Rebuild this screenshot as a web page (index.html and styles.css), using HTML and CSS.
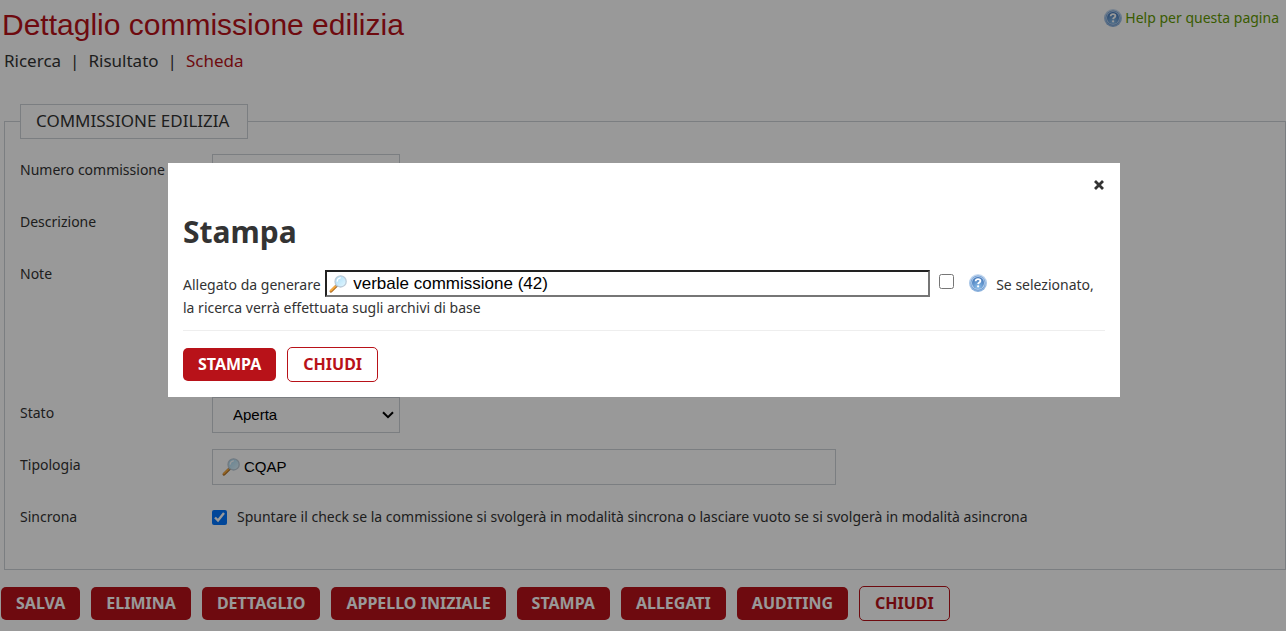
FILE: index.html
```html
<!DOCTYPE html>
<html lang="it">
<head>
<meta charset="utf-8">
<title>Dettaglio commissione edilizia</title>
<meta name="viewport" content="width=device-width, initial-scale=1">
<link rel="stylesheet" href="styles.css">
</head>
<body>
<svg class="sprite" aria-hidden="true">
  <defs>
    <radialGradient id="help-fill" cx="50%" cy="85%" r="80%">
      <stop offset="0" stop-color="#8fc0ea"/>
      <stop offset="1" stop-color="#4377b9"/>
    </radialGradient>
    <linearGradient id="help-rim" x1="0" y1="0" x2="0" y2="1">
      <stop offset="0" stop-color="#c9dcf2"/>
      <stop offset="1" stop-color="#86aedb"/>
    </linearGradient>
    <linearGradient id="lens-fill" x1="0" y1="0" x2="1" y2="1">
      <stop offset="0" stop-color="#a5dbf7"/>
      <stop offset="1" stop-color="#e6f8ff"/>
    </linearGradient>
    <symbol id="icon-help" viewBox="0 0 18 18">
      <circle cx="9" cy="9" r="9" fill="url(#help-rim)"/>
      <circle cx="9" cy="9" r="7.4" fill="#6f9bd0"/>
      <circle cx="9" cy="9" r="6.8" fill="#b9d2ee"/>
      <circle cx="9" cy="9" r="6" fill="url(#help-fill)"/>
      <path d="M6.6 7.2C6.7 5.8 7.6 5.1 9 5.1s2.4.7 2.4 1.9c0 1.5-2.1 1.5-2.3 3.1" fill="none" stroke="#fff" stroke-width="1.8"/>
      <circle cx="9.1" cy="12.3" r="1.1" fill="#fff"/>
    </symbol>
    <symbol id="icon-lens" viewBox="0 0 18 18">
      <path d="M7.6 10.8L2 16.2" stroke="#b06f24" stroke-width="2.8" stroke-linecap="round"/>
      <path d="M7.2 10.4L1.8 15.6" stroke="#f5a93f" stroke-width="1.9" stroke-linecap="round"/>
      <path d="M8.4 9.8L7 11.2" stroke="#8d9499" stroke-width="2.2"/>
      <circle cx="11.6" cy="6.4" r="5.6" fill="url(#lens-fill)" stroke="#bccbd8" stroke-width="1.3"/>
      <path d="M8.2 6.2a3.6 3.6 0 0 1 3.2-3.3" fill="none" stroke="#fff" stroke-width="1.2" stroke-linecap="round"/>
    </symbol>
  </defs>
</svg>

<header class="page-header">
  <div>
    <h1 class="page-title">Dettaglio commissione edilizia</h1>
    <nav class="crumbs">
      <a href="#ricerca">Ricerca</a><span>|</span><a href="#risultato">Risultato</a><span>|</span><a class="current" href="#scheda">Scheda</a>
    </nav>
  </div>
  <a class="help-link" href="#help"><svg class="icon" aria-hidden="true"><use href="#icon-help"/></svg>Help per questa pagina</a>
</header>

<main>
  <fieldset class="panel">
    <legend>COMMISSIONE EDILIZIA</legend>
    <div class="row">
      <label for="numero">Numero commissione</label>
      <input id="numero" class="field short" type="text">
    </div>
    <div class="row">
      <label for="descrizione">Descrizione</label>
      <input id="descrizione" class="field" type="text">
    </div>
    <div class="row">
      <label for="note">Note</label>
      <textarea id="note" class="field note"></textarea>
    </div>
    <div class="row">
      <label for="stato">Stato</label>
      <div class="select-box field short">
        <select id="stato"><option>Aperta</option></select>
        <svg class="chevron" viewBox="0 0 12 8" aria-hidden="true"><path d="M1 1.2l5 5 5-5" fill="none" stroke="#000" stroke-width="2"/></svg>
      </div>
    </div>
    <div class="row">
      <label for="tipologia">Tipologia</label>
      <div class="search-box field">
        <svg class="icon" aria-hidden="true"><use href="#icon-lens"/></svg>
        <input id="tipologia" type="text" value="CQAP">
      </div>
    </div>
    <div class="row">
      <span>Sincrona</span>
      <div class="check-line">
        <input id="sincrona" class="check" type="checkbox" checked>
        <label for="sincrona">Spuntare il check se la commissione si svolgerà in modalità sincrona o lasciare vuoto se si svolgerà in modalità asincrona</label>
      </div>
    </div>
  </fieldset>

  <div class="actions">
    <button class="btn" type="button">SALVA</button>
    <button class="btn" type="button">ELIMINA</button>
    <button class="btn" type="button">DETTAGLIO</button>
    <button class="btn" type="button">APPELLO INIZIALE</button>
    <button class="btn" type="button">STAMPA</button>
    <button class="btn" type="button">ALLEGATI</button>
    <button class="btn" type="button">AUDITING</button>
    <button class="btn outline" type="button">CHIUDI</button>
  </div>
</main>

<div class="overlay">
  <section class="modal" role="dialog" aria-modal="true" aria-labelledby="modal-title">
    <div class="modal-top">
      <button class="close" type="button" aria-label="Chiudi finestra"><svg viewBox="0 0 12 12" aria-hidden="true"><path d="M2 2l8 8M10 2l-8 8" stroke="#333" stroke-width="2.8" stroke-linecap="butt"/></svg></button>
    </div>
    <h2 id="modal-title">Stampa</h2>
    <div class="modal-text">
      <label for="allegato">Allegato da generare</label>
      <span class="attach-box"><svg class="icon" aria-hidden="true"><use href="#icon-lens"/></svg><input id="allegato" type="text" value="verbale commissione (42)"></span>
      <input id="archivi" class="check" type="checkbox">
      <svg class="icon inline-help" aria-hidden="true"><use href="#icon-help"/></svg>
      <label for="archivi">Se selezionato, la ricerca verrà effettuata sugli archivi di base</label>
    </div>
    <div class="modal-actions">
      <button class="btn" type="button">STAMPA</button>
      <button class="btn outline" type="button">CHIUDI</button>
    </div>
  </section>
</div>
</body>
</html>
```
FILE: styles.css
```css
* {
  box-sizing: border-box;
}

body {
  margin: 0;
  background: #fff;
  color: #333;
  font: 14px/24px "Noto Sans", sans-serif;
}

a {
  color: inherit;
  text-decoration: none;
}

input,
select,
textarea {
  margin: 0;
  font: 15px "Liberation Sans", sans-serif;
  color: #000;
}

.sprite {
  position: absolute;
  width: 0;
  height: 0;
}

.icon {
  flex: none;
  width: 18px;
  height: 18px;
}

.page-header {
  display: flex;
  justify-content: space-between;
  align-items: flex-start;
  padding: 6px 7px 0 2px;
}

.page-title {
  margin: 0;
  color: #b81219;
  font: 30px/38px "Liberation Sans", sans-serif;
}

.crumbs {
  display: flex;
  gap: 9px;
  padding: 5px 2px;
  font-size: 17px;
}

.crumbs .current {
  color: #b81219;
}

.help-link {
  display: flex;
  align-items: center;
  gap: 3px;
  color: #629900;
}

.panel {
  display: flex;
  flex-direction: column;
  gap: 16px;
  min-width: 0;
  margin: 26px 0 0 4px;
  padding: 15px 15px 36px;
  border: 1px solid #ced2d8;
}

.panel legend {
  padding: 4px 18px 5px 15px;
  border: 1px solid #ced2d8;
  font-size: 17px;
}

.row {
  display: grid;
  grid-template-columns: 192px 1fr;
  line-height: 32px;
}

.field {
  width: 624px;
  max-width: 100%;
  height: 36px;
  border: 1px solid #ced2d8;
  background: #fff;
}

.field.short {
  width: 188px;
}

.field.note {
  height: 123px;
}

.select-box {
  display: grid;
  align-items: center;
}

.select-box select {
  grid-area: 1 / 1;
  width: 100%;
  height: 34px;
  padding: 0 20px 2px;
  border: 0;
  background: transparent;
  appearance: none;
}

.chevron {
  grid-area: 1 / 1;
  justify-self: end;
  width: 12px;
  height: 8px;
  margin-right: 5px;
  pointer-events: none;
}

.search-box {
  display: flex;
  align-items: center;
  gap: 4px;
  padding: 0 9px;
}

.search-box input,
.attach-box input {
  flex: 1;
  min-width: 0;
  padding: 0;
  border: 0;
  background: transparent;
  outline: 0;
}

.search-box input {
  padding-bottom: 2px;
}

.check {
  width: 15px;
  height: 15px;
}

.check-line {
  display: flex;
  align-items: center;
  gap: 10px;
}

.actions,
.modal-actions {
  display: flex;
  align-items: center;
  gap: 11px;
}

.actions {
  padding: 16px 1px 8px;
}

.btn {
  padding: 0 15px;
  border: 0;
  border-radius: 5px;
  background: #b81219;
  color: #fff;
  font: bold 16px/33px "Noto Sans", sans-serif;
}

.btn.outline {
  border: 1px solid #b81219;
  background: #fff;
  color: #b81219;
}

.overlay {
  position: fixed;
  inset: 0;
  display: flex;
  justify-content: center;
  align-items: flex-start;
  padding: 163px 0 0 2px;
  background: rgba(0, 0, 0, 0.4);
}

.modal {
  width: 952px;
  max-width: 100%;
  padding: 15px;
  background: #fff;
}

.modal-top {
  display: flex;
  justify-content: flex-end;
}

.close {
  display: flex;
  padding: 0;
  border: 0;
  background: none;
}

.close svg {
  width: 12px;
  height: 14px;
}

.modal h2 {
  margin: 20px 0 18px;
  font: bold 30px/40px "Noto Sans", sans-serif;
}

.modal-text {
  padding-bottom: 12px;
  border-bottom: 1px solid #eee;
  line-height: 21px;
}

.attach-box {
  display: inline-flex;
  align-items: center;
  gap: 6px;
  width: 605px;
  height: 27px;
  margin-left: 1px;
  padding-left: 2px;
  border: 2px solid;
  border-color: #222 #767676 #767676 #222;
  vertical-align: -3px;
}

.attach-box input {
  font-size: 17px;
}

.modal-text .check {
  margin: 0 11px 0 5px;
  vertical-align: 1px;
}

.inline-help {
  margin-right: 6px;
  vertical-align: -2px;
}

.modal-actions {
  padding-top: 16px;
}
```
